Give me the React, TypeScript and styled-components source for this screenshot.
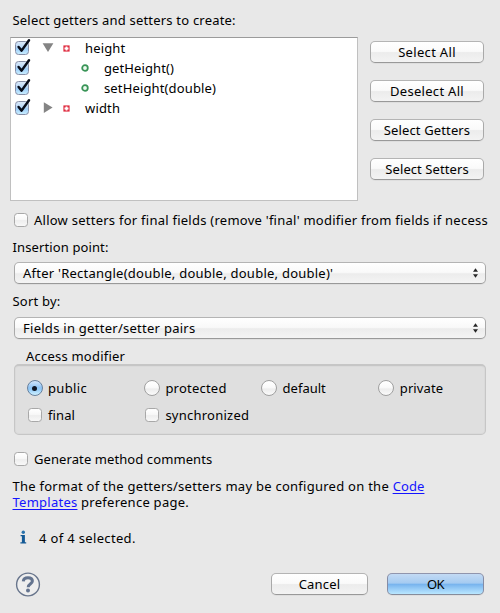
import React from 'react';
import styled, { createGlobalStyle, css } from 'styled-components';

const GlobalStyle = createGlobalStyle`
  * { box-sizing: border-box; }
  body { margin: 0; background: #e8e8e8; }
  button { appearance: none; }
`;

const Dialog = styled.main`
  width: 500px;
  height: 613px;
  padding: 12px 12px 0 10px;
  overflow: hidden;
  display: flex;
  flex-direction: column;
  background: #e8e8e8;
  color: #000;
  font: 13px/16px 'Noto Sans', 'Open Sans', sans-serif;
`;

const Text = styled.span<{ $track?: number }>`
  display: inline-block;
  white-space: pre;
  letter-spacing: ${(p) => p.$track ?? 0.2}px;
`;

const Caption = styled.div<{ $top?: number; $left?: number }>`
  height: 16px;
  margin: ${(p) => p.$top ?? 0}px 0 0 ${(p) => p.$left ?? 2.5}px;
`;

const Chooser = styled.section`
  display: flex;
  gap: 12px;
  margin-top: 9px;
`;

const Tree = styled.div`
  width: 348px;
  height: 164px;
  border: 1px solid #c0c0c0;
  border-top-color: #9b9b9b;
  background: #fff;
`;

const TreeRow = styled.div`
  display: flex;
  align-items: center;
  height: 20px;
  padding-left: 4px;
`;

const Twisty = styled.span`
  width: 34px;
  padding-left: 13px;
  display: flex;
`;

const Marker = styled.span<{ $method?: boolean }>`
  display: flex;
  width: ${(p) => (p.$method ? 41 : 22)}px;
  padding-left: ${(p) => (p.$method ? 18 : 0)}px;
`;

const ButtonColumn = styled.div`
  display: flex;
  flex-direction: column;
  gap: 17px;
  padding-top: 4px;
`;

const PushButton = styled.button<{ $width: number; $primary?: boolean }>`
  width: ${(p) => p.$width}px;
  height: 22px;
  padding: 0 0 1px;
  display: flex;
  align-items: center;
  justify-content: center;
  border: 1px solid #a9a9a9;
  border-color: #b4b4b4 #a9a9a9 #999;
  border-radius: 5px;
  background: linear-gradient(#fff 0%, #fafafa 47%, #ececec 53%, #f3f3f3 100%);
  box-shadow: 0 1px 0 #dedede;
  color: #000;
  font: inherit;
  ${(p) =>
    p.$primary &&
    css`
      border-color: #9095ad #858ca5 #868c9b;
      background: linear-gradient(#c3daf4 0%, #a5cbf1 45%, #78b4ee 52%, #9dd0f8 78%, #b9e7ff 100%);
    `}
`;

const CheckRow = styled.label<{ $top: number }>`
  display: flex;
  align-items: center;
  width: 478px;
  height: 16px;
  margin-top: ${(p) => p.$top}px;
  padding-left: 4px;
  gap: 6px;
  overflow: hidden;
`;

const CheckBox = styled.span<{ $checked?: boolean }>`
  position: relative;
  flex: none;
  width: 14px;
  height: 14px;
  border: 1px solid #a8a8a8;
  border-radius: 3.5px;
  background: linear-gradient(#fff, #f8f8f8 45%, #eee 55%, #f8f8f8);
  ${(p) =>
    p.$checked &&
    css`
      border-color: #858da6;
      background: linear-gradient(#dceafa, #b3d5f6 48%, #9dcdf8 56%, #c8edff);
    `}
  svg { position: absolute; left: -1px; top: -4px; }
`;

const PopUp = styled.button<{ $top: number }>`
  display: flex;
  align-items: center;
  justify-content: space-between;
  width: 472px;
  height: 22px;
  margin: ${(p) => p.$top}px 0 0 4px;
  padding: 0 6px 0 8px;
  border: 1px solid #a9a9a9;
  border-color: #b4b4b4 #a9a9a9 #999;
  border-radius: 5px;
  background: linear-gradient(#fff 0%, #f9f9f9 47%, #ececec 54%, #f4f4f4 100%);
  box-shadow: 0 1px 0 #dedede;
  color: #000;
  font: inherit;
  text-align: left;
`;

const Group = styled.fieldset`
  display: grid;
  grid-template-columns: 117.4px 117.2px 117.2px 1fr;
  grid-template-rows: 16px 16px;
  row-gap: 11px;
  width: 472px;
  height: 71px;
  margin: 0 0 0 4px;
  padding: 14px 0 0 11px;
  border: 1px solid #c6c6c6;
  border-top-width: 2px;
  border-radius: 5px;
  background: #dfdfdf;
  box-shadow: inset 0 0 0 1px #dadada;
`;

const Option = styled.label`
  display: flex;
  align-items: center;
  gap: 5px;
`;

const ControlSlot = styled.span`
  width: 17px;
  display: flex;
  justify-content: center;
`;

const Radio = styled.span<{ $selected?: boolean }>`
  width: 16px;
  height: 16px;
  flex: none;
  display: flex;
  align-items: center;
  justify-content: center;
  border: 1px solid #a0a0a0;
  border-radius: 50%;
  background: linear-gradient(#fff, #fafafa 45%, #ededed 58%, #fbfbfb);
  ${(p) =>
    p.$selected &&
    css`
      border-color: #66809d;
      background: linear-gradient(#d2e5fa, #8fc4f5 48%, #91caf7 60%, #d0f1ff);
      &::after {
        content: '';
        width: 5px;
        height: 5px;
        border-radius: 50%;
        background: #101725;
      }
    `}
`;

const Hint = styled.div`
  margin: 11px 0 0 2.5px;
`;

const HintLine = styled.div`
  display: flex;
  height: 16px;
`;

const Link = styled.a<{ $track: number }>`
  display: inline-block;
  letter-spacing: ${(p) => p.$track}px;
  color: #1414ff;
  text-decoration: underline;
  text-underline-offset: 2px;
  text-decoration-thickness: 1px;
  text-decoration-skip-ink: none;
`;

const Status = styled.div`
  display: flex;
  align-items: center;
  height: 16px;
  margin: 20px 0 0 10px;
  gap: 12px;
`;

const Footer = styled.footer`
  display: flex;
  align-items: flex-start;
  margin: 26px 0 0 5px;
`;

const FooterButtons = styled.div`
  display: flex;
  gap: 19px;
  margin: 1px 4px 0 auto;
`;

const CheckMark = () => (
  <svg width="16" height="17" viewBox="0 0 16 17">
    <path d="M3.6 9 6.6 12.6 14 2.2" fill="none" stroke="#080d1a" strokeWidth="2.5" strokeLinecap="round" strokeLinejoin="round" />
  </svg>
);

const Triangle = ({ open }: { open: boolean }) => (
  <svg width="12" height="12" viewBox="0 0 12 12">
    <path d={open ? 'M.6 1.2h10.8L6 10z' : 'M1.8.3v10.6L10.6 5.6z'} fill="#848484" />
  </svg>
);

const FieldIcon = () => (
  <svg width="7" height="8" viewBox="0 0 7 8">
    <rect x=".4" y="1.4" width="6.2" height="6.2" fill="#df2b3f" />
    <path d="M2.6 2.4h1.8v1.1h1.1v2H4.4v1.1H2.6V5.5H1.5v-2h1.1z" fill="#fff" />
  </svg>
);

const MethodIcon = () => (
  <svg width="8" height="8" viewBox="0 0 8 8">
    <circle cx="4" cy="4" r="2.8" fill="#eefaf0" stroke="#399457" strokeWidth="1.8" />
  </svg>
);

const Arrows = () => (
  <svg width="7" height="12" viewBox="0 0 7 12">
    <path d="M1 4.8 3.5 1.3 6 4.8zM1 7.2h5L3.5 10.7z" fill="#262626" />
  </svg>
);

const InfoIcon = () => (
  <svg width="7" height="16" viewBox="0 0 7 16">
    <path d="M.6 5h4.3v7.2h1.3v1.3H.4v-1.3h1.5V6.3H.6z" fill="#135995" />
    <circle cx="3.3" cy="2.3" r="1.7" fill="#2872ac" />
  </svg>
);

const HelpIcon = () => (
  <svg width="26" height="26" viewBox="0 0 26 26">
    <circle cx="13" cy="12.5" r="11.4" fill="#eeeeee" stroke="#68758c" strokeWidth="1.4" />
    <path d="M8.3 9.4C8.5 6.7 10.4 5.8 13 5.8c2.7 0 4.4 1.2 4.4 3.2 0 3.1-4.2 3-4.2 6.2" fill="none" stroke="#64748f" strokeWidth="3" />
    <circle cx="13" cy="18.5" r="2" fill="#64748f" />
  </svg>
);

const members = [
  { name: 'height', track: 0.15, open: true },
  { name: 'getHeight()', track: 0.1, method: true },
  { name: 'setHeight(double)', track: 0.14, method: true },
  { name: 'width', track: 0.18, open: false },
];

const actions = [
  { label: 'Select All', track: 0.32 },
  { label: 'Deselect All', track: 0.3 },
  { label: 'Select Getters', track: 0.13 },
  { label: 'Select Setters', track: 0.08 },
];

const radios = [
  { label: 'public', track: 0.35, selected: true },
  { label: 'protected', track: 0.22 },
  { label: 'default', track: 0 },
  { label: 'private', track: 0.12 },
];

export default function App() {
  return (
    <Dialog>
      <GlobalStyle />
      <Caption><Text $track={0.2}>Select getters and setters to create:</Text></Caption>
      <Chooser>
        <Tree>
          {members.map((m) => (
            <TreeRow key={m.name}>
              <CheckBox $checked><CheckMark /></CheckBox>
              <Twisty>{!m.method && <Triangle open={!!m.open} />}</Twisty>
              <Marker $method={m.method}>{m.method ? <MethodIcon /> : <FieldIcon />}</Marker>
              <Text $track={m.track}>{m.name}</Text>
            </TreeRow>
          ))}
        </Tree>
        <ButtonColumn>
          {actions.map((a) => (
            <PushButton key={a.label} $width={114}><Text $track={a.track}>{a.label}</Text></PushButton>
          ))}
        </ButtonColumn>
      </Chooser>
      <CheckRow $top={11}>
        <CheckBox />
        <Text $track={0.25}>Allow setters for final fields (remove 'final' modifier from fields if necess</Text>
      </CheckRow>
      <Caption $top={11}><Text $track={0.12}>Insertion point:</Text></Caption>
      <PopUp $top={7}>
        <Text $track={0.24}>After 'Rectangle(double, double, double, double)'</Text>
        <Arrows />
      </PopUp>
      <Caption $top={9}><Text $track={0.2}>Sort by:</Text></Caption>
      <PopUp $top={8}>
        <Text $track={0.27}>Fields in getter/setter pairs</Text>
        <Arrows />
      </PopUp>
      <Caption $top={9} $left={16}><Text $track={0.22}>Access modifier</Text></Caption>
      <Group>
        {radios.map((r) => (
          <Option key={r.label}>
            <ControlSlot><Radio $selected={r.selected} /></ControlSlot>
            <Text $track={r.track}>{r.label}</Text>
          </Option>
        ))}
        <Option><ControlSlot><CheckBox /></ControlSlot><Text $track={0.1}>final</Text></Option>
        <Option><ControlSlot><CheckBox /></ControlSlot><Text $track={0.24}>synchronized</Text></Option>
      </Group>
      <CheckRow $top={16}>
        <CheckBox />
        <Text $track={0.09}>Generate method comments</Text>
      </CheckRow>
      <Hint>
        <HintLine>
          <Text $track={0.26}>The format of the getters/setters may be configured on the </Text>
          <Link href="#" $track={0.1}>Code</Link>
        </HintLine>
        <HintLine>
          <Link href="#" $track={0.25}>Templates</Link>
          <Text $track={0.26}> preference page.</Text>
        </HintLine>
      </Hint>
      <Status><InfoIcon /><Text $track={0.34}>4 of 4 selected.</Text></Status>
      <Footer>
        <HelpIcon />
        <FooterButtons>
          <PushButton $width={97}><Text $track={0.18}>Cancel</Text></PushButton>
          <PushButton $width={97} $primary><Text $track={-0.5}>OK</Text></PushButton>
        </FooterButtons>
      </Footer>
    </Dialog>
  );
}
